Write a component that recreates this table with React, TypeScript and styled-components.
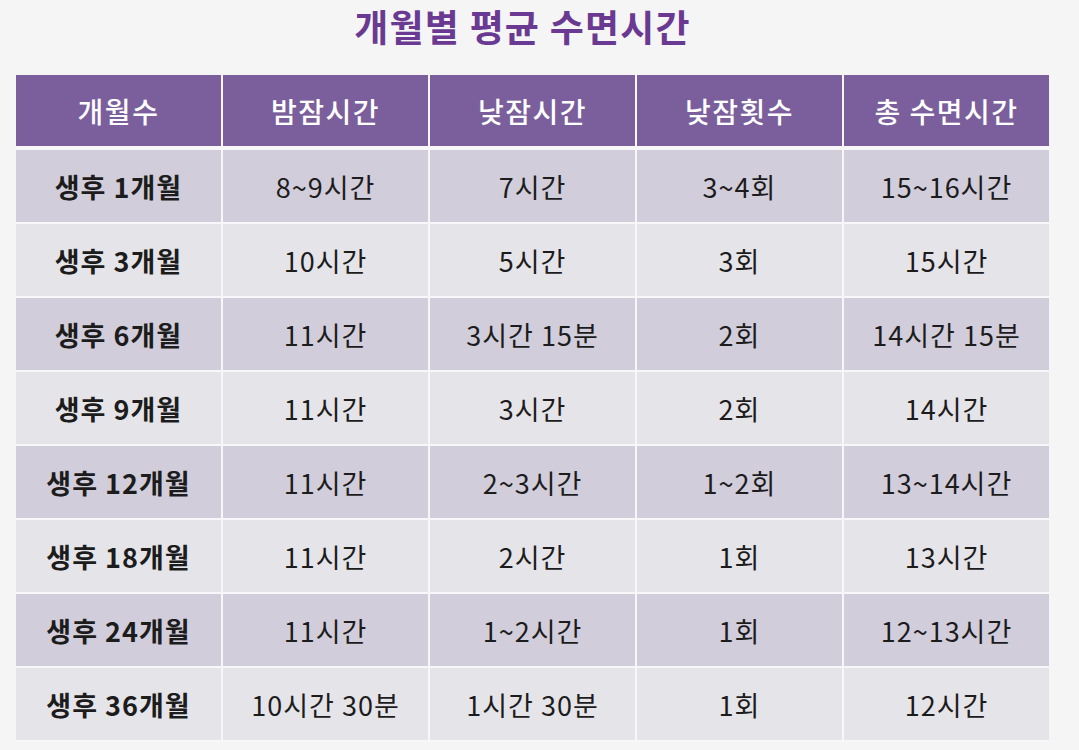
import React from 'react';
import styled, { createGlobalStyle } from 'styled-components';

const GlobalStyle = createGlobalStyle`
  html, body {
    margin: 0;
    padding: 0;
    background: #f5f5f5;
  }
  body {
    font-family: "Noto Sans CJK KR", "Noto Sans", sans-serif;
  }
`;

const Page = styled.div`
  width: 1079px;
  height: 750px;
  overflow: hidden;
  display: flex;
  flex-direction: column;
  align-items: flex-start;
  padding: 0 0 0 16px;
  box-sizing: border-box;
`;

const Title = styled.h1`
  align-self: stretch;
  margin: 0;
  padding: 0 50px 0 0;
  height: 75px;
  line-height: 52px;
  text-align: center;
  font-size: 37px;
  font-weight: 700;
  color: #6a3a92;
  letter-spacing: 1.2px;
`;

const Table = styled.div`
  display: grid;
  grid-template-columns: repeat(5, 205px);
  column-gap: 2px;
  background: #f7f6f9;
`;

const HeaderCell = styled.div`
  height: 71px;
  display: flex;
  align-items: center;
  justify-content: center;
  background: #7b5f9c;
  color: #ffffff;
  font-size: 28px;
  font-weight: 500;
  letter-spacing: 1.5px;
  margin-bottom: 4px;
`;

const Cell = styled.div<{ $shade: boolean; $bold?: boolean }>`
  height: 72px;
  margin-bottom: 2px;
  display: flex;
  align-items: center;
  justify-content: center;
  background: ${p => (p.$shade ? '#d1cddb' : '#e5e4e9')};
  color: #1c1c1c;
  font-size: 27px;
  letter-spacing: 1px;
  font-weight: ${p => (p.$bold ? 700 : 400)};
`;

const headers = ['개월수', '밤잠시간', '낮잠시간', '낮잠횟수', '총 수면시간'];

const rows: string[][] = [
  ['생후 1개월', '8~9시간', '7시간', '3~4회', '15~16시간'],
  ['생후 3개월', '10시간', '5시간', '3회', '15시간'],
  ['생후 6개월', '11시간', '3시간 15분', '2회', '14시간 15분'],
  ['생후 9개월', '11시간', '3시간', '2회', '14시간'],
  ['생후 12개월', '11시간', '2~3시간', '1~2회', '13~14시간'],
  ['생후 18개월', '11시간', '2시간', '1회', '13시간'],
  ['생후 24개월', '11시간', '1~2시간', '1회', '12~13시간'],
  ['생후 36개월', '10시간 30분', '1시간 30분', '1회', '12시간'],
];

const App: React.FC = () => {
  return (
    <>
      <GlobalStyle />
      <Page>
        <Title>개월별 평균 수면시간</Title>
        <Table>
          {headers.map(h => (
            <HeaderCell key={h}>{h}</HeaderCell>
          ))}
          {rows.map((row, i) =>
            row.map((text, j) => (
              <Cell key={`${i}-${j}`} $shade={i % 2 === 0} $bold={j === 0}>
                {text}
              </Cell>
            ))
          )}
        </Table>
      </Page>
    </>
  );
};

export default App;
